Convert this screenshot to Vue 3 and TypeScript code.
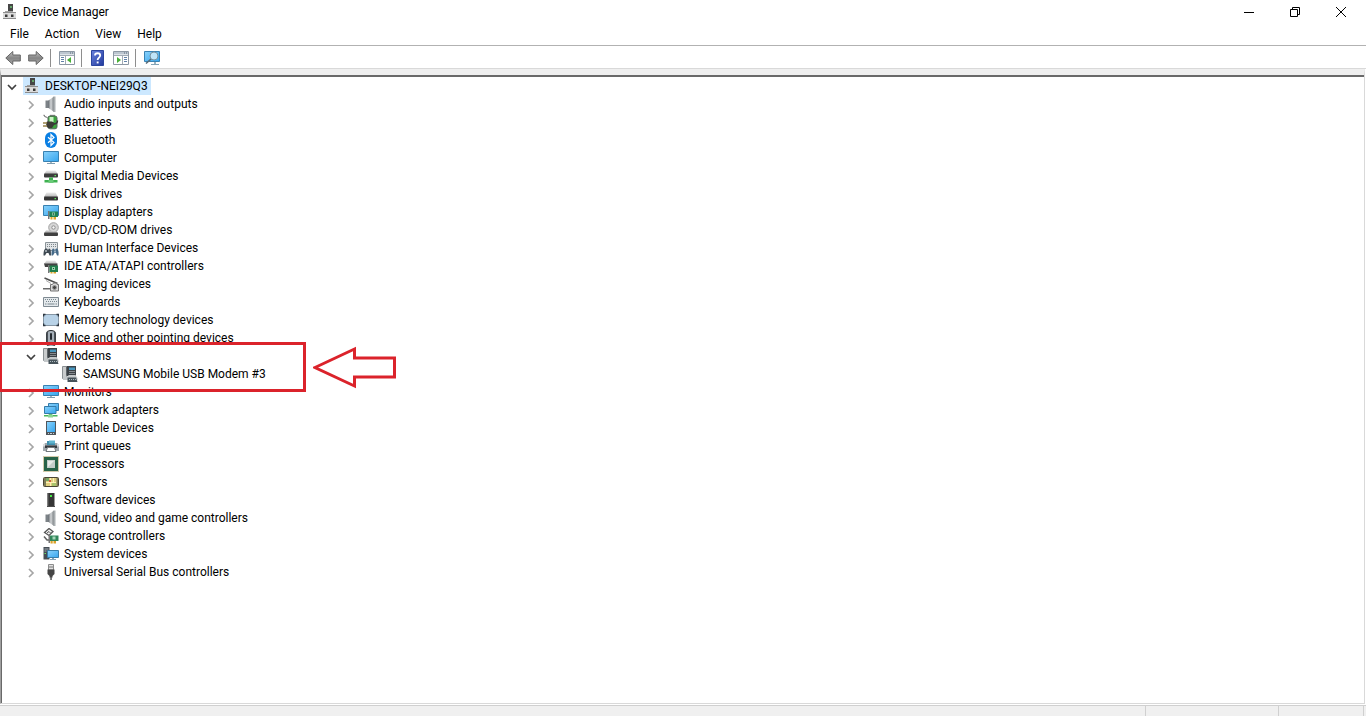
<script setup lang="ts">
import { ref } from 'vue'

interface Category {
  name: string
  icon: string
  open?: boolean
  devices?: string[]
}

const menus: string[] = ['File', 'Action', 'View', 'Help']

const categories = ref<Category[]>([
  { name: 'Audio inputs and outputs', icon: 'speaker' },
  { name: 'Batteries', icon: 'battery' },
  { name: 'Bluetooth', icon: 'bluetooth' },
  { name: 'Computer', icon: 'monitor' },
  { name: 'Digital Media Devices', icon: 'media' },
  { name: 'Disk drives', icon: 'disk' },
  { name: 'Display adapters', icon: 'display' },
  { name: 'DVD/CD-ROM drives', icon: 'dvd' },
  { name: 'Human Interface Devices', icon: 'hid' },
  { name: 'IDE ATA/ATAPI controllers', icon: 'ide' },
  { name: 'Imaging devices', icon: 'imaging' },
  { name: 'Keyboards', icon: 'keyboard' },
  { name: 'Memory technology devices', icon: 'memory' },
  { name: 'Mice and other pointing devices', icon: 'mouse' },
  { name: 'Modems', icon: 'modem', open: true, devices: ['SAMSUNG Mobile USB Modem #3'] },
  { name: 'Monitors', icon: 'monitor' },
  { name: 'Network adapters', icon: 'network' },
  { name: 'Portable Devices', icon: 'portable' },
  { name: 'Print queues', icon: 'printer' },
  { name: 'Processors', icon: 'cpu' },
  { name: 'Sensors', icon: 'sensor' },
  { name: 'Software devices', icon: 'software' },
  { name: 'Sound, video and game controllers', icon: 'speaker' },
  { name: 'Storage controllers', icon: 'storage' },
  { name: 'System devices', icon: 'system' },
  { name: 'Universal Serial Bus controllers', icon: 'usb' },
])

const rootOpen = ref(true)
</script>

<template>
  <div class="window">
    <svg class="defs" width="0" height="0" aria-hidden="true">
      <defs>
        <linearGradient id="g-screen" x1="0" y1="0" x2="1" y2="1">
          <stop offset="0" stop-color="#8ad2fb" /><stop offset="1" stop-color="#35a5ee" />
        </linearGradient>
        <linearGradient id="g-metal" x1="0" y1="0" x2="1" y2="0">
          <stop offset="0" stop-color="#6d7277" /><stop offset=".45" stop-color="#d5d8da" /><stop offset="1" stop-color="#6f7478" />
        </linearGradient>
        <linearGradient id="g-top" x1="0" y1="0" x2="0" y2="1">
          <stop offset="0" stop-color="#ececec" /><stop offset="1" stop-color="#b4b4b4" />
        </linearGradient>
        <linearGradient id="g-arrow" x1="0" y1="0" x2="0" y2="1">
          <stop offset="0" stop-color="#c4c4c4" /><stop offset=".5" stop-color="#858585" /><stop offset="1" stop-color="#aaaaaa" />
        </linearGradient>
        <linearGradient id="g-help" x1="0" y1="0" x2="1" y2="1">
          <stop offset="0" stop-color="#6a83dd" /><stop offset="1" stop-color="#20389c" />
        </linearGradient>
      </defs>

      <symbol id="i-root" viewBox="0 0 16 16">
        <path d="M6 0h5v7H6z" fill="#464646" /><path d="M8 2h2v2H8z" fill="#63a568" />
        <path d="M3 7h8v2H3z" fill="#a4a4a4" />
        <path d="M1 9h13v6H1z" fill="#dcdcdc" /><path d="M1 14h13v1H1z" fill="#8c8c8c" /><path d="M1 8h13v1H1z" fill="#8f8f8f" />
        <path d="M3 10.500h2.500V13H3zM9 10.500h2.500V13H9z" fill="#383838" />
      </symbol>

      <symbol id="i-speaker" viewBox="0 0 16 16">
        <path d="M2.500 4.500H6V12H2.500z" fill="#7c8287" />
        <path d="M5.500 4.500 11 .5V16l-5.500-4z" fill="url(#g-metal)" />
        <path d="M10.500.5h2V16h-2z" fill="#a9aeb1" />
      </symbol>

      <symbol id="i-battery" viewBox="0 0 16 16">
        <path d="M7 .8h5v2H7z" fill="#8d938d" />
        <rect x="5" y="2" width="9" height="12.800" rx="2" fill="#3aa53c" stroke="#56635a" />
        <path d="M6.500 3h4v5h-4z" fill="#c9f1c3" />
        <path d="M1 .8c-.5 2 2.500 2 3.500 3" fill="none" stroke="#505050" />
        <path d="M4 7.500h5l3 2-3 4.500H5c-2-1.500-2.500-5-1-6.500z" fill="#3b3b36" />
        <path d="M0 9h4M0 12h4" stroke="#97824a" stroke-width="1.400" />
        <path d="M10.500 10c3 0 4-1 4-3.500" fill="none" stroke="#383838" stroke-width="1.500" />
      </symbol>

      <symbol id="i-bluetooth" viewBox="0 0 16 16">
        <rect x="2" y="0" width="12" height="16" rx="6" fill="#0a7fe3" />
        <path d="m5 5.200 6 5.300-3 3v-11l3 3L5 10.800" fill="none" stroke="#fff" stroke-width="1.200" />
      </symbol>

      <symbol id="i-monitor" viewBox="0 0 16 16">
        <path d="M.5 1.500h15v10H.5z" fill="url(#g-screen)" stroke="#3981b1" />
        <path d="M7 12h2v2H7z" fill="#a6b6c0" /><path d="M4 13h8v1H4z" fill="#7e9caf" />
      </symbol>

      <symbol id="i-media" viewBox="0 0 16 16">
        <path d="M3.500 2.500h9L15 6H1z" fill="url(#g-top)" />
        <rect x="1" y="5.500" width="14" height="4" rx="1" fill="#3c3c3c" />
        <path d="M11.500 7H13v1.200h-1.500z" fill="#5ce35a" />
        <path d="M6 9.500h4V12h4.500v2.500h-13V12H6z" fill="#3eb150" /><path d="M5.500 12h5v3h-5z" fill="#69c977" />
      </symbol>

      <symbol id="i-disk" viewBox="0 0 16 16">
        <path d="M3.500 6.500h9L15 11H1z" fill="url(#g-top)" />
        <rect x="1" y="10.500" width="14" height="4" rx="1" fill="#353535" />
        <path d="M11.500 12H13v1.200h-1.500z" fill="#5ce35a" />
      </symbol>

      <symbol id="i-display" viewBox="0 0 16 16">
        <path d="M.5 1.500h15v10H.5z" fill="url(#g-screen)" stroke="#3981b1" />
        <path d="M5 7h1.500v8H5z" fill="#777" />
        <path d="M6.500 7.500H15V13H6.500z" fill="#1f8253" /><path d="M9 8.500h3v3H9z" fill="#8dd1a8" /><path d="M9.800 9.300h1.400v1.400H9.800z" fill="#204d39" />
        <path d="M7.500 13h2v2.500h-2zM10.500 13H13v2.500h-2.500z" fill="#e0a92c" />
      </symbol>

      <symbol id="i-dvd" viewBox="0 0 16 16">
        <circle cx="10.500" cy="5.500" r="4.800" fill="#d6d6d6" stroke="#a2a2a2" />
        <circle cx="10.500" cy="5.500" r="1.700" fill="#f7f7f7" stroke="#8c8c8c" />
        <path d="M3 8.500h5l2 1h3.500l1.500 1.500H1z" fill="#c0c0c0" />
        <rect x="1" y="10.500" width="14" height="3.500" rx="1" fill="#404040" />
      </symbol>

      <symbol id="i-hid" viewBox="0 0 16 16">
        <path d="M2.500 2.500h12v8h-12z" fill="#e2e5e7" stroke="#8b9499" />
        <path d="M4 4.500h10M4 6.500h10" stroke="#7e878c" stroke-dasharray="1 1" />
        <path d="M.5 15.500c0-5 1-7.500 3.500-7L5 10l1-1.500c2 0 2 3 2 7H6.500L5.500 13h-2L2 15.500z" fill="#3f4a53" />
        <path d="M8.500 15.500c0-5 .5-7 2-7L12 10l1-1.500c2 0 3 2.500 2.500 7H14L13 13h-1.500L10 15.500z" fill="#466a88" />
        <path d="M3 10v2M12 10.500v2" stroke="#e9f0f4" />
      </symbol>

      <symbol id="i-ide" viewBox="0 0 16 16">
        <path d="M3.500 2.500H12L14.500 6H1z" fill="url(#g-top)" /><path d="M1 5.500h13.500V9H2z" fill="#424242" />
        <path d="M5 7h1.500v8H5z" fill="#777" /><path d="M6.500 7.500H15V14H6.500z" fill="#227f4d" />
        <path d="M9 9h3v3H9z" fill="#95cfa8" /><path d="M10 10h1v1h-1z" fill="#174b31" />
        <path d="M7.500 14h2v1.500h-2zM10.500 14H13v1.500h-2.500z" fill="#daa328" />
      </symbol>

      <symbol id="i-imaging" viewBox="0 0 16 16">
        <path d="m1.500 2 13 5.500" stroke="#505050" stroke-width="1.500" />
        <path d="m3 4.500 5 3" stroke="#aaa" />
        <path d="M0 12h7v1.500H0z" fill="#6a6a6a" />
        <path d="M7.500 8.500h2l1-1.500H13l1 1.500h1.500v6.500h-8z" fill="#d7d7d7" stroke="#747474" />
        <circle cx="11.500" cy="11.500" r="2" fill="#444" stroke="#999" />
      </symbol>

      <symbol id="i-keyboard" viewBox="0 0 16 16">
        <path d="M.5 3.500h15v9H.5z" fill="#e4e9ec" stroke="#7f8a92" />
        <path d="M2 5.500h12M3 7.500h11" stroke="#7a878f" stroke-dasharray="1 1" />
        <path d="M2 10h1.500m1 0h7m1 0H14" stroke="#7a878f" />
      </symbol>

      <symbol id="i-memory" viewBox="0 0 16 16">
        <rect x=".5" y="2.500" width="15" height="11" rx="1" fill="#b8d2e7" stroke="#8596a4" />
        <path d="M.5 4.500v-2h2M13.500 2.500h2v2M.5 11.500v2h2M13.500 13.500h2v-2" fill="none" stroke="#2f3943" stroke-width="1.500" />
      </symbol>

      <symbol id="i-mouse" viewBox="0 0 16 16">
        <rect x="3.500" y=".5" width="9" height="16" rx="3.500" fill="#a5afb8" stroke="#303539" />
        <path d="M4.200 2v13M11.800 2v13" stroke="#464c52" stroke-width="1.500" />
        <rect x="7" y="3" width="2" height="7" rx="1" fill="#242a30" />
      </symbol>

      <symbol id="i-modem" viewBox="0 0 16 16">
        <path d="M5 0h9v10H5z" fill="#3c4247" /><path d="M7 1.500h6V4H7z" fill="#4897bf" />
        <path d="M7.500 5.500h6M7.500 7.500h6" stroke="#d3d7db" stroke-dasharray="1 1" />
        <path d="M.5.5h4v12h-4z" fill="#c9cccd" stroke="#898f92" /><path d="M4.500.5v9" stroke="#60666a" />
        <path d="M1 10.500h4l2-1.500h6.500l2 3V14H1z" fill="#c4c8ca" />
        <path d="M5.500 11.500H14l1.500 4.500h-10z" fill="#46535a" /><path d="M7 13.500h7" stroke="#abb8be" stroke-dasharray="1 1" />
      </symbol>

      <symbol id="i-network" viewBox="0 0 16 16">
        <path d="M5.500 1.500h10v7h-10z" fill="url(#g-screen)" stroke="#347ba9" />
        <path d="M1.500 4.500H13v7H1.500z" fill="url(#g-screen)" stroke="#347ba9" />
        <path d="M6 12h3v1h5.500v1.500H1V13h5z" fill="#49b558" /><path d="M5 12.500h5v3H5z" fill="#8bd594" />
      </symbol>

      <symbol id="i-portable" viewBox="0 0 16 16">
        <path d="M3 1h10v14H3z" fill="#50565b" /><path d="M4 2h8v10H4z" fill="url(#g-screen)" /><path d="M5 13.500h1M7 13.500h2M10 13.500h1" stroke="#c7cfd5" />
      </symbol>

      <symbol id="i-printer" viewBox="0 0 16 16">
        <path d="M4 3h8v4H4z" fill="#408dab" /><path d="M6 2.500h6v3H6z" fill="#61b5cf" />
        <path d="M2 5h2v2h8V5h2l2 3v5H0V8z" fill="#a1a8ad" />
        <path d="M2 7.500h12V10H2z" fill="#353a3e" /><path d="M0 6h2v2.500H0zM14 6h2v2.500h-2z" fill="#d9dcde" />
        <path d="M4.500 9.500h7l1.500 4H3z" fill="#fff" stroke="#73797d" />
      </symbol>

      <symbol id="i-cpu" viewBox="0 0 16 16">
        <rect x=".5" y=".5" width="15" height="15" fill="none" stroke="#a69554" stroke-dasharray="1 1" />
        <path d="M1 1h14v14H1z" fill="#286348" /><path d="M4 4h8v8H4z" fill="#c5ceca" /><path d="M5 5h6l-6 6z" fill="#e7ebe8" />
      </symbol>

      <symbol id="i-sensor" viewBox="0 0 16 16">
        <rect x=".5" y="3.500" width="15" height="9" rx="1" fill="#e0cf7e" stroke="#4b4534" />
        <path d="M1 4h2v8H1zM13.500 4H15v8h-1.500z" fill="#7c7c58" />
        <path d="M3 4h3v3H3z" fill="#76a565" /><path d="M9 9h4v3H9z" fill="#a9c46c" />
        <path d="M3 8.500h10M7.500 4v8M10.500 4v4" stroke="#fff0b7" />
        <path d="M6 6h2v2H6z" fill="#d0603f" />
      </symbol>

      <symbol id="i-software" viewBox="0 0 16 16">
        <path d="M4.500 1h7v14h-7z" fill="#353535" /><path d="M4.500 1h1v13h-1z" fill="#666" /><path d="M7 3h2v2H7z" fill="#47ea47" /><path d="M4 14h8v1H4z" fill="#4b4b4b" />
      </symbol>

      <symbol id="i-storage" viewBox="0 0 16 16">
        <path d="m1.500 4.500 4.500-4 4 3-4 4z" fill="#f2f2f2" stroke="#555" stroke-width="1.300" />
        <path d="m4 5 2-1.500L7.500 5" fill="none" stroke="#555" />
        <path d="m1 8.500 3 3.500h3" fill="none" stroke="#606060" stroke-width="1.500" />
        <path d="M5.500 6.500H7V15H5.500z" fill="#777" /><path d="M7 7.500h8.500v5.500H7z" fill="#31865a" /><path d="M9.500 8.500h3v3h-3z" fill="#a5d5b8" />
        <path d="M7.500 13h2.200v2.500H7.500zM10.500 13H13v2.500h-2.500z" fill="#dba228" />
      </symbol>

      <symbol id="i-system" viewBox="0 0 16 16">
        <path d="M.5 1h6v12.500h-6z" fill="#454d54" /><path d="M1.500 3h4M1.500 5h2" stroke="#a0abb4" /><path d="M1.500 7H3v1H1.500z" fill="#6bdd6b" />
        <path d="M4.500 4.500h11v7h-11z" fill="url(#g-screen)" stroke="#367da9" /><path d="M9 12h2v1h2v1H7v-1h2z" fill="#84a2b5" />
      </symbol>

      <symbol id="i-usb" viewBox="0 0 16 16">
        <path d="M5.500.5h5V6h-5z" fill="#e1e1e1" stroke="#8c8c8c" /><path d="M6.500 2h1v2h-1zM8.500 2h1v2h-1z" fill="#777" />
        <path d="M4.500 5.500h7V10l-2 2v1.500h-3V12l-2-2z" fill="#454545" /><path d="M7.300 13h1.500v3H7.300z" fill="#555" />
      </symbol>

      <symbol id="i-arrow" viewBox="0 0 16 16">
        <path d="m.8 8 7-6.500V5h7.500v6H7.800v3.500z" fill="url(#g-arrow)" stroke="#646464" />
      </symbol>
      <symbol id="i-pane" viewBox="0 0 16 16">
        <path d="M.5 1.500h15v13H.5z" fill="#fff" stroke="#8d98a4" /><path d="M1 2h14v2.500H1z" fill="#bcc6d0" />
        <path d="M11 3h1m1 0h1" stroke="#586878" /><path d="M1 5.500h14" stroke="#a1abb5" />
      </symbol>
      <symbol id="i-tree-pane" viewBox="0 0 16 16">
        <use href="#i-pane" /><path d="M6.500 6v8" stroke="#a1abb5" /><path d="M2 7.500h3M2 9.500h3M2 11.500h3" stroke="#6282a8" />
        <path d="m12 7-4 3 4 3z" fill="#48af38" />
      </symbol>
      <symbol id="i-action-pane" viewBox="0 0 16 16">
        <use href="#i-pane" /><path d="M9.500 6v8" stroke="#a1abb5" /><path d="M11 7.500h3M11 9.500h3M11 11.500h3" stroke="#6282a8" />
        <path d="m4 7 4 3-4 3z" fill="#48af38" />
      </symbol>
      <symbol id="i-help" viewBox="0 0 16 16">
        <path d="M1.500.5h12v15h-12z" fill="url(#g-help)" stroke="#2c459f" />
        <path d="M5 5.500C5 2.500 10.200 2.500 10.200 5.500 10.200 7.500 7.600 7.700 7.600 10" fill="none" stroke="#fff" stroke-width="1.800" /><path d="M6.700 11.500h1.900v1.900H6.700z" fill="#fff" />
      </symbol>
      <symbol id="i-scan" viewBox="0 0 16 16">
        <path d="M.5 1.500h15v10H.5z" fill="url(#g-screen)" stroke="#3a83b4" /><path d="M7 14h8v1H7z" fill="#84a4b7" /><path d="M10 12h2v2h-2z" fill="#99b2c0" />
        <circle cx="10" cy="6" r="4" fill="#bfe4f8" stroke="#79919e" /><path d="m7 9-5 4.500" stroke="#596b76" stroke-width="1.600" />
      </symbol>
      <symbol id="i-down" viewBox="0 0 12 12"><path d="m2 4 4 4 4-4" fill="none" stroke="#404040" stroke-width="1.700" /></symbol>
      <symbol id="i-right" viewBox="0 0 12 12"><path d="m4 2 4 4-4 4" fill="none" stroke="#a6a6a6" stroke-width="1.700" /></symbol>
    </svg>

    <header class="titlebar">
      <svg class="icon"><use href="#i-root" /></svg>
      <h1>Device Manager</h1>
      <div class="controls">
        <button type="button" aria-label="Minimize"><svg width="10" height="10" viewBox="0 0 10 10"><path d="M0 5.500h10" /></svg></button>
        <button type="button" aria-label="Restore"><svg width="10" height="10" viewBox="0 0 10 10"><path d="M.5 2.500h7v7h-7zM2.500 2.500v-2h7v7h-2" /></svg></button>
        <button type="button" aria-label="Close"><svg width="10" height="10" viewBox="0 0 10 10"><path d="m0 0 10 10M10 0 0 10" /></svg></button>
      </div>
    </header>

    <nav class="menubar">
      <button v-for="m in menus" :key="m" type="button">{{ m }}</button>
    </nav>

    <div class="toolbar" role="toolbar" aria-label="Tools">
      <button type="button" aria-label="Back"><svg class="icon"><use href="#i-arrow" /></svg></button>
      <button type="button" aria-label="Forward"><svg class="icon flip"><use href="#i-arrow" /></svg></button>
      <span class="sep"></span>
      <button type="button" aria-label="Show or hide console tree"><svg class="icon"><use href="#i-tree-pane" /></svg></button>
      <span class="sep"></span>
      <button type="button" aria-label="Help"><svg class="icon"><use href="#i-help" /></svg></button>
      <button type="button" aria-label="Show or hide action pane"><svg class="icon"><use href="#i-action-pane" /></svg></button>
      <span class="sep"></span>
      <button type="button" aria-label="Scan for hardware changes"><svg class="icon"><use href="#i-scan" /></svg></button>
    </div>

    <main class="pane">
      <ul class="tree">
        <li>
          <div class="row">
            <button class="toggle" type="button" aria-label="Toggle DESKTOP-NEI29Q3" @click="rootOpen = !rootOpen">
              <svg><use :href="rootOpen ? '#i-down' : '#i-right'" /></svg>
            </button>
            <span class="item selected"><svg class="icon"><use href="#i-root" /></svg><span>DESKTOP-NEI29Q3</span></span>
          </div>
          <ul v-if="rootOpen" class="branch">
            <li v-for="c in categories" :key="c.name">
              <div class="row">
                <button class="toggle" type="button" :aria-label="'Toggle ' + c.name" @click="c.open = !c.open">
                  <svg><use :href="c.open ? '#i-down' : '#i-right'" /></svg>
                </button>
                <span class="item"><svg class="icon"><use :href="'#i-' + c.icon" /></svg><span>{{ c.name }}</span></span>
              </div>
              <ul v-if="c.open && c.devices" class="leaves">
                <li v-for="d in c.devices" :key="d" class="row">
                  <span class="item"><svg class="icon"><use :href="'#i-' + c.icon" /></svg><span>{{ d }}</span></span>
                </li>
              </ul>
            </li>
          </ul>
        </li>
      </ul>
    </main>

    <footer class="status"><span></span><span></span><span></span></footer>

    <div class="mark-box"></div>
    <svg class="mark-arrow" width="84" height="44" viewBox="0 0 84 44">
      <path d="M2 21.500 41.500 3v9h40v19h-40v9z" />
    </svg>
  </div>
</template>

<style>
body {
  margin: 0;
  background: #fff;
}
</style>

<style scoped>
.window {
  position: relative;
  display: flex;
  flex-direction: column;
  min-height: 100vh;
  overflow: hidden;
  background: #fff;
  color: #000;
  font: 12px/18px "Segoe UI", Roboto, "Open Sans", sans-serif;
}
.defs {
  position: absolute;
}
button {
  padding: 0;
  border: 0;
  background: none;
  color: inherit;
  font: inherit;
}
ul {
  margin: 0;
  padding: 0;
  list-style: none;
}
.icon {
  flex: none;
  display: block;
  width: 16px;
  height: 16px;
}
.flip {
  transform: scaleX(-1);
}
.titlebar {
  display: flex;
  align-items: center;
  gap: 5px;
  height: 23px;
  padding: 0 2px;
}
h1 {
  margin: 0;
  font-size: 12px;
  font-weight: 400;
}
.controls {
  display: flex;
  margin-left: auto;
}
.controls button {
  display: flex;
  align-items: center;
  justify-content: center;
  width: 46px;
  height: 21px;
}
.controls path {
  fill: none;
  stroke: #000;
}
.menubar {
  display: flex;
  gap: 16px;
  height: 22px;
  padding: 0 10px;
  border-bottom: 1px solid #b2b2b2;
}
.toolbar {
  display: flex;
  align-items: center;
  gap: 7px;
  height: 20px;
  padding: 2px 5px 0;
  border-bottom: 1px solid #d9d9d9;
}
.sep {
  width: 1px;
  height: 18px;
  margin: 0 1px 0 -1px;
  background: #8e8e8e;
}
.pane {
  flex: 1;
  display: flex;
  margin-right: 1px;
  border: 1px solid #d9d9d9;
  border-top: 6px solid #efefef;
  border-left-color: #a0a0a0;
}
.tree {
  flex: 1;
  padding-bottom: 4px;
  border-top: 2px solid #696969;
  border-left: 1px solid #696969;
}
.row {
  display: flex;
  align-items: center;
  height: 18px;
}
.toggle {
  flex: none;
  width: 12px;
  height: 12px;
  margin: 2px 5px 0 4px;
}
.toggle svg {
  display: block;
  width: 12px;
  height: 12px;
}
.item {
  display: flex;
  align-items: center;
  gap: 5px;
  height: 18px;
  padding: 0 3px 0 1px;
  white-space: nowrap;
}
.selected {
  background: #cce8ff;
}
.branch {
  padding-left: 19px;
}
.leaves {
  padding-left: 40px;
}
.status {
  display: flex;
  height: 10px;
  margin-top: 1px;
  border-top: 1px solid #d0d0d0;
  background: #f0f0f0;
}
.status span {
  width: 132px;
  border-right: 1px solid #d0d0d0;
}
.status span:first-child {
  flex: 1;
}
.status span:last-child {
  width: 84px;
  margin-right: 2px;
}
.mark-box {
  position: absolute;
  top: 342px;
  left: 0;
  box-sizing: border-box;
  width: 306px;
  height: 50px;
  border: 3px solid #db232b;
  border-left-width: 2px;
}
.mark-arrow {
  position: absolute;
  top: 346px;
  left: 313px;
}
.mark-arrow path {
  fill: none;
  stroke: #db232b;
  stroke-width: 3;
}
</style>
